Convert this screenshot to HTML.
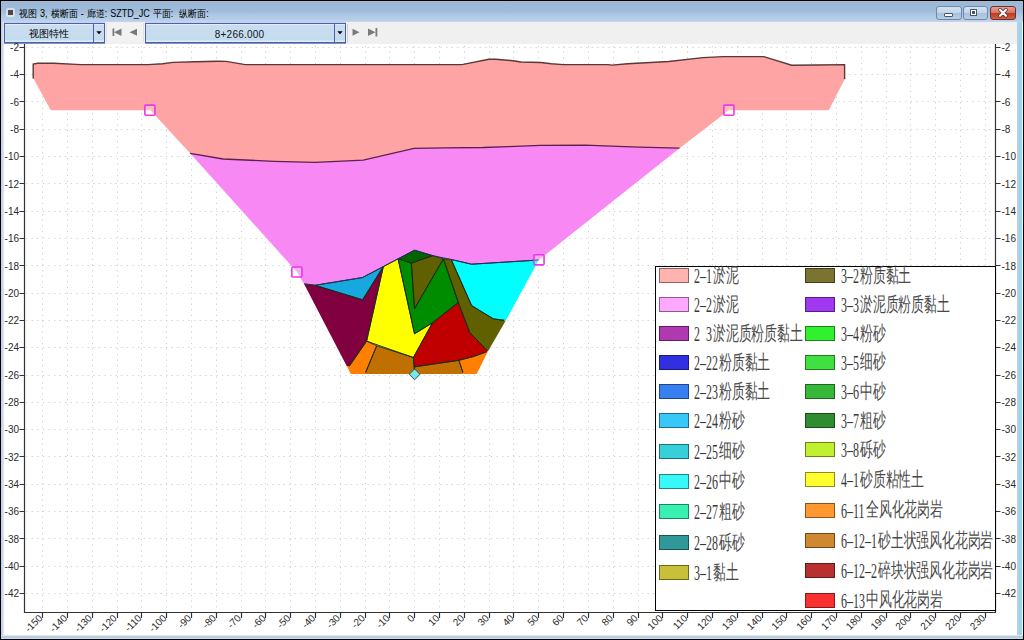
<!DOCTYPE html>
<html><head><meta charset="utf-8"><style>
html,body{margin:0;padding:0}
body{width:1024px;height:640px;overflow:hidden;position:relative;background:#000;font-family:"Liberation Sans",sans-serif}
.a{position:absolute}
.lab{position:absolute;font-size:10px;line-height:10px;color:#222;white-space:nowrap}
.lg{position:absolute;font-family:"Liberation Serif",serif;color:#111;white-space:nowrap}
</style></head><body>

<div class="a" style="left:1px;top:1px;width:1022px;height:638px;background:linear-gradient(90deg,#c8d8e8 0,#bccce4 1px,#d8e4f4 2px,#d8e4f4 1016px,#c0d0e0 1016px,#bccce8 1017px,#a0d4e8 1018px,#a0d4e8 1021px,#e0ffff 1021px)"></div>
<div class="a" style="left:1px;top:1px;width:1022px;height:21px;background:linear-gradient(180deg,#b0b8c8 0,#9cb8d8 1.5px,#a0bcda 10px,#b0cae4 15px,#b4d0e8 19px,#c4d0f0 20px,#c8d4f4 21px)"></div>
<div class="a" style="left:1px;top:635px;width:1022px;height:4px;background:linear-gradient(180deg,#dce8f4 0,#dce8f4 1px,#b8ccdc 1px,#bcd0e4 3px,#c8dcec 3px)"></div>
<div class="a" style="left:4px;top:22px;width:1013px;height:22px;background:#f0f0f0"></div>
<div class="a" style="left:4px;top:22px;width:101px;height:1px;background:#c4d0f0"></div>
<div class="a" style="left:145px;top:22px;width:201px;height:1px;background:#c4d0f0"></div>
<div class="a" style="left:4px;top:44px;width:1013px;height:591px;background:#fff"></div>
<div class="a" style="left:6px;top:8px;width:9px;height:9px;background:rgba(255,255,255,.5);border-radius:2px"></div>
<div class="a" style="left:8px;top:10px;width:5px;height:5px;background:#5a4440"></div>
<div class="a" style="left:19px;top:7.5px;font-size:10px;line-height:12px;color:#000;white-space:nowrap;font-weight:500;word-spacing:0.6px;transform:scaleX(0.9);transform-origin:0 0">视图 3, 横断面 - 廊道: SZTD_JC 平面:&nbsp; 纵断面:</div>
<div class="a" style="left:936px;top:6px;width:24px;height:12px;border:1px solid #7088a8;border-radius:3px;background:linear-gradient(180deg,#d4e2f2 0,#c0d4ea 50%,#a8c0dc 50%,#b8cce4 100%)"></div>
<div class="a" style="left:944px;top:13px;width:7px;height:2px;background:#fff;border:1px solid #48586c;border-radius:1px"></div>
<div class="a" style="left:963px;top:6px;width:23px;height:12px;border:1px solid #7088a8;border-radius:3px;background:linear-gradient(180deg,#d4e2f2 0,#c0d4ea 50%,#a8c0dc 50%,#b8cce4 100%)"></div>
<div class="a" style="left:971px;top:9.5px;width:3px;height:3px;border:1.6px solid #fff;outline:1px solid #48586c;background:#48586c"></div>
<div class="a" style="left:990px;top:6px;width:24px;height:12px;border:1px solid #6a3030;border-radius:3px;background:linear-gradient(180deg,#e8a090 0,#d87060 50%,#c03820 50%,#d06040 100%)"></div>
<svg class="a" style="left:990px;top:6px" width="26" height="14"><path d="M10 3.8 L16 9.8 M16 3.8 L10 9.8" stroke="#5a2a2a" stroke-width="3.6" stroke-linecap="round"/><path d="M10 3.8 L16 9.8 M16 3.8 L10 9.8" stroke="#fff" stroke-width="2.1" stroke-linecap="round"/></svg>
<div class="a" style="left:4px;top:23px;width:99px;height:18px;border:1px solid #5060a4;background:linear-gradient(180deg,#dceeff 0,#dceeff 1px,#cadcf0 1px,#c4dcee 16px,#d8f0f8 17px,#d8f0f8 18px);box-shadow:0 1px 0 rgba(90,100,170,.7)"></div>
<div class="a" style="left:93px;top:23px;width:1px;height:20px;background:#5060a4"></div>
<div class="a" style="left:4px;width:89px;text-align:center;line-height:12px;color:#1a2430;top:27.5px;font-size:9.6px;color:#000">视图特性</div>
<svg class="a" style="left:96.0px;top:30.5px" width="6" height="4"><path d="M0.3 0.3 L5.7 0.3 L3 3.3Z" fill="#000"/></svg>
<div class="a" style="left:145px;top:23px;width:199px;height:18px;border:1px solid #5060a4;background:linear-gradient(180deg,#dceeff 0,#dceeff 1px,#cadcf0 1px,#c4dcee 16px,#d8f0f8 17px,#d8f0f8 18px);box-shadow:0 1px 0 rgba(90,100,170,.7)"></div>
<div class="a" style="left:334px;top:23px;width:1px;height:20px;background:#5060a4"></div>
<div class="a" style="left:145px;width:189px;text-align:center;line-height:12px;color:#1a2430;top:28.8px;font-size:10px;letter-spacing:0.2px;color:#101820">8+266.000</div>
<svg class="a" style="left:337.0px;top:30.5px" width="6" height="4"><path d="M0.3 0.3 L5.7 0.3 L3 3.3Z" fill="#000"/></svg>
<div class="a" style="left:347px;top:24px;width:1px;height:19px;background:#d0d0d0"></div>
<div class="a" style="left:106px;top:23px;width:36px;height:19px;border-left:1px solid #e2e2e2;border-right:1px solid #e2e2e2;background:#f2f2f2"></div>
<svg class="a" style="left:105px;top:22px" width="290" height="22"><rect x="7.5" y="6.5" width="1.8" height="7.5" fill="#7a7a7a"/><path d="M9 10.2 L16.5 6.5 L16.5 14Z" fill="#7a7a7a"/><path d="M24.5 10.2 L32 6.8 L32 13.8Z" fill="#7a7a7a"/><path d="M254.5 10.2 L247.5 6.8 L247.5 13.8Z" fill="#7a7a7a"/><path d="M270.5 10.2 L263 6.5 L263 14Z" fill="#7a7a7a"/><rect x="270.5" y="6" width="1.8" height="8.5" fill="#7a7a7a"/></svg>
<svg class="a" style="left:0;top:0" width="1024" height="640">
<g stroke="#d2d2d2" stroke-width="1" stroke-dasharray="1.3 4.3" fill="none">
<line x1="26" y1="47.5" x2="995" y2="47.5"/>
<line x1="26" y1="74.5" x2="995" y2="74.5"/>
<line x1="26" y1="101.5" x2="995" y2="101.5"/>
<line x1="26" y1="129.5" x2="995" y2="129.5"/>
<line x1="26" y1="156.5" x2="995" y2="156.5"/>
<line x1="26" y1="183.5" x2="995" y2="183.5"/>
<line x1="26" y1="211.5" x2="995" y2="211.5"/>
<line x1="26" y1="238.5" x2="995" y2="238.5"/>
<line x1="26" y1="265.5" x2="995" y2="265.5"/>
<line x1="26" y1="293.5" x2="995" y2="293.5"/>
<line x1="26" y1="320.5" x2="995" y2="320.5"/>
<line x1="26" y1="347.5" x2="995" y2="347.5"/>
<line x1="26" y1="375.5" x2="995" y2="375.5"/>
<line x1="26" y1="402.5" x2="995" y2="402.5"/>
<line x1="26" y1="429.5" x2="995" y2="429.5"/>
<line x1="26" y1="456.5" x2="995" y2="456.5"/>
<line x1="26" y1="484.5" x2="995" y2="484.5"/>
<line x1="26" y1="511.5" x2="995" y2="511.5"/>
<line x1="26" y1="538.5" x2="995" y2="538.5"/>
<line x1="26" y1="566.5" x2="995" y2="566.5"/>
<line x1="26" y1="593.5" x2="995" y2="593.5"/>
<line x1="42.5" y1="46" x2="42.5" y2="611"/>
<line x1="67.5" y1="46" x2="67.5" y2="611"/>
<line x1="92.5" y1="46" x2="92.5" y2="611"/>
<line x1="117.5" y1="46" x2="117.5" y2="611"/>
<line x1="141.5" y1="46" x2="141.5" y2="611"/>
<line x1="166.5" y1="46" x2="166.5" y2="611"/>
<line x1="191.5" y1="46" x2="191.5" y2="611"/>
<line x1="216.5" y1="46" x2="216.5" y2="611"/>
<line x1="241.5" y1="46" x2="241.5" y2="611"/>
<line x1="265.5" y1="46" x2="265.5" y2="611"/>
<line x1="290.5" y1="46" x2="290.5" y2="611"/>
<line x1="315.5" y1="46" x2="315.5" y2="611"/>
<line x1="340.5" y1="46" x2="340.5" y2="611"/>
<line x1="365.5" y1="46" x2="365.5" y2="611"/>
<line x1="389.5" y1="46" x2="389.5" y2="611"/>
<line x1="414.5" y1="46" x2="414.5" y2="611"/>
<line x1="439.5" y1="46" x2="439.5" y2="611"/>
<line x1="464.5" y1="46" x2="464.5" y2="611"/>
<line x1="489.5" y1="46" x2="489.5" y2="611"/>
<line x1="513.5" y1="46" x2="513.5" y2="611"/>
<line x1="538.5" y1="46" x2="538.5" y2="611"/>
<line x1="563.5" y1="46" x2="563.5" y2="611"/>
<line x1="588.5" y1="46" x2="588.5" y2="611"/>
<line x1="613.5" y1="46" x2="613.5" y2="611"/>
<line x1="638.5" y1="46" x2="638.5" y2="611"/>
<line x1="662.5" y1="46" x2="662.5" y2="611"/>
<line x1="687.5" y1="46" x2="687.5" y2="611"/>
<line x1="712.5" y1="46" x2="712.5" y2="611"/>
<line x1="737.5" y1="46" x2="737.5" y2="611"/>
<line x1="762.5" y1="46" x2="762.5" y2="611"/>
<line x1="786.5" y1="46" x2="786.5" y2="611"/>
<line x1="811.5" y1="46" x2="811.5" y2="611"/>
<line x1="836.5" y1="46" x2="836.5" y2="611"/>
<line x1="861.5" y1="46" x2="861.5" y2="611"/>
<line x1="886.5" y1="46" x2="886.5" y2="611"/>
<line x1="910.5" y1="46" x2="910.5" y2="611"/>
<line x1="935.5" y1="46" x2="935.5" y2="611"/>
<line x1="960.5" y1="46" x2="960.5" y2="611"/>
<line x1="985.5" y1="46" x2="985.5" y2="611"/>
</g>
<polygon points="33.2,64.0 37.7,63.3 53.6,63.3 80.9,64.6 148.1,64.6 162.7,63.7 172.9,62.4 195.7,61.7 217.3,61.2 226.2,61.4 245.2,64.6 462.0,64.6 488.8,59.3 495.7,59.3 513.0,60.7 521.0,62.0 531.0,62.3 540.7,62.5 551.5,63.7 563.2,64.6 608.0,64.6 612.0,65.1 627.7,63.7 668.8,61.5 703.0,57.6 723.2,56.6 763.8,56.6 791.7,65.2 816.5,65.0 844.6,64.6 844.6,79.2 828.8,110.3 728.9,110.3 679.5,148.2 638.7,147.2 610.8,146.2 585.4,145.1 540.2,145.3 508.5,146.6 483.1,147.5 445.0,147.8 414.0,148.3 363.2,160.1 331.5,161.7 315.0,162.4 273.9,161.3 223.1,159.0 190.1,153.3 150.4,110.3 50.8,110.3 33.2,78.0" fill="#ffa4a4"/>
<polygon points="190.1,153.3 223.1,159.0 273.9,161.3 315.0,162.4 331.5,161.7 363.2,160.1 414.0,148.3 445.0,147.8 483.1,147.5 508.5,146.6 540.2,145.3 585.4,145.1 610.8,146.2 638.7,147.2 679.5,148.2 538.8,260.0 471.6,264.2 451.2,259.5 432.5,255.6 414.5,250.2 398.1,258.8 383.3,266.6 362.6,277.5 315.0,285.3 304.1,283.9 297.0,272.0" fill="#f888f4"/>
<polygon points="304.1,283.9 315.0,285.3 362.6,299.8 383.3,266.6 366.6,341.1 349.4,366.0 346.7,366.0" fill="#800040"/>
<polygon points="315.0,285.3 362.6,277.5 383.3,266.6 362.6,299.8" fill="#18a8e0"/>
<polygon points="383.3,266.6 398.1,258.8 414.5,333.8 432.5,322.8 413.4,357.5 366.6,341.1" fill="#ffff00"/>
<polygon points="366.6,341.1 376.7,345.8 365.0,373.9 350.9,373.9 346.7,366.0 349.4,366.0" fill="#ff8000"/>
<polygon points="376.7,345.8 413.4,357.5 414.2,366.9 414.7,373.9 365.0,373.9" fill="#c07000"/>
<polygon points="398.1,258.8 414.5,250.2 432.5,255.6 411.4,263.1" fill="#006400"/>
<polygon points="411.4,263.1 432.5,255.6 443.4,258.8 414.5,308.8" fill="#606000"/>
<polygon points="398.1,258.8 411.4,263.1 414.5,308.8 443.4,258.8 458.3,302.5 432.5,322.8 414.5,333.8" fill="#008c00"/>
<polygon points="443.4,258.8 451.2,259.5 471.6,305.6 493.4,318.9 505.8,320.5 488.0,351.3 469.7,332.5 458.3,302.5" fill="#606000"/>
<polygon points="451.2,259.5 471.6,264.2 538.8,260.0 505.8,320.5 493.4,318.9 471.6,305.6" fill="#00ffff"/>
<polygon points="432.5,322.8 458.3,302.5 469.7,332.5 488.0,351.3 472.8,356.7 458.8,360.3 414.2,366.9 413.4,357.5" fill="#c00000"/>
<polygon points="414.2,366.9 458.8,360.3 463.4,373.9 414.7,373.9" fill="#c07000"/>
<polygon points="458.8,360.3 472.8,356.7 488.0,351.3 476.7,373.9 463.4,373.9" fill="#ff8000"/>
<clipPath id="inn"><polygon points="200,230 600,230 537.3,260 475.3,372.6 352.3,372.6 298.4,272 200,250"/></clipPath>
<g clip-path="url(#inn)" fill="none" stroke="#1a2a10" stroke-width="0.9" stroke-linejoin="round">
<polygon points="304.1,283.9 315.0,285.3 362.6,299.8 383.3,266.6 366.6,341.1 349.4,366.0 346.7,366.0"/>
<polygon points="315.0,285.3 362.6,277.5 383.3,266.6 362.6,299.8"/>
<polygon points="383.3,266.6 398.1,258.8 414.5,333.8 432.5,322.8 413.4,357.5 366.6,341.1"/>
<polygon points="366.6,341.1 376.7,345.8 365.0,373.9 350.9,373.9 346.7,366.0 349.4,366.0"/>
<polygon points="376.7,345.8 413.4,357.5 414.2,366.9 414.7,373.9 365.0,373.9"/>
<polygon points="398.1,258.8 414.5,250.2 432.5,255.6 411.4,263.1"/>
<polygon points="411.4,263.1 432.5,255.6 443.4,258.8 414.5,308.8"/>
<polygon points="398.1,258.8 411.4,263.1 414.5,308.8 443.4,258.8 458.3,302.5 432.5,322.8 414.5,333.8"/>
<polygon points="443.4,258.8 451.2,259.5 471.6,305.6 493.4,318.9 505.8,320.5 488.0,351.3 469.7,332.5 458.3,302.5"/>
<polygon points="451.2,259.5 471.6,264.2 538.8,260.0 505.8,320.5 493.4,318.9 471.6,305.6"/>
<polygon points="432.5,322.8 458.3,302.5 469.7,332.5 488.0,351.3 472.8,356.7 458.8,360.3 414.2,366.9 413.4,357.5"/>
<polygon points="414.2,366.9 458.8,360.3 463.4,373.9 414.7,373.9"/>
<polygon points="458.8,360.3 472.8,356.7 488.0,351.3 476.7,373.9 463.4,373.9"/>
</g>
<polyline points="33.2,78.6 33.2,64.0 37.7,63.3 53.6,63.3 80.9,64.6 148.1,64.6 162.7,63.7 172.9,62.4 195.7,61.7 217.3,61.2 226.2,61.4 245.2,64.6 462.0,64.6 488.8,59.3 495.7,59.3 513.0,60.7 521.0,62.0 531.0,62.3 540.7,62.5 551.5,63.7 563.2,64.6 608.0,64.6 612.0,65.1 627.7,63.7 668.8,61.5 703.0,57.6 723.2,56.6 763.8,56.6 791.7,65.2 816.5,65.0 844.6,64.6 844.6,79.2" fill="none" stroke="#5a3838" stroke-width="1.4"/>
<polyline points="190.1,153.3 223.1,159.0 273.9,161.3 315.0,162.4 331.5,161.7 363.2,160.1 414.0,148.3 445.0,147.8 483.1,147.5 508.5,146.6 540.2,145.3 585.4,145.1 610.8,146.2 638.7,147.2 679.5,148.2" fill="none" stroke="#5a2050" stroke-width="1.3"/>
<polyline points="538.8,260.0 471.6,264.2 451.2,259.5 432.5,255.6 414.5,250.2 398.1,258.8 383.3,266.6 362.6,277.5 315.0,285.3 304.1,283.9" fill="none" stroke="#203060" stroke-width="1"/>
<rect x="144.85" y="105.10" width="10.1" height="10.1" rx="1" fill="rgba(255,255,255,.3)" stroke="#e838e8" stroke-width="1.6"/>
<rect x="291.85" y="266.95" width="10.1" height="10.1" rx="1" fill="rgba(255,255,255,.3)" stroke="#e838e8" stroke-width="1.6"/>
<rect x="533.95" y="254.75" width="10.1" height="10.1" rx="1" fill="rgba(255,255,255,.3)" stroke="#e838e8" stroke-width="1.6"/>
<rect x="723.85" y="105.10" width="10.1" height="10.1" rx="1" fill="rgba(255,255,255,.3)" stroke="#e838e8" stroke-width="1.6"/>
<path d="M414.6 368.9 L420 374.3 L414.6 379.7 L409.2 374.3Z" fill="#78e6e6" stroke="#285050" stroke-width="1"/>
<g stroke="#333" stroke-width="1.2" fill="none">
<path d="M24.5 44 V612.5 H996 M995.5 44 V612"/>
<path d="M19.5 47.5 H24 M995 47.5 H1000.5"/>
<path d="M19.5 74.5 H24 M995 74.5 H1000.5"/>
<path d="M19.5 101.5 H24 M995 101.5 H1000.5"/>
<path d="M19.5 129.5 H24 M995 129.5 H1000.5"/>
<path d="M19.5 156.5 H24 M995 156.5 H1000.5"/>
<path d="M19.5 183.5 H24 M995 183.5 H1000.5"/>
<path d="M19.5 211.5 H24 M995 211.5 H1000.5"/>
<path d="M19.5 238.5 H24 M995 238.5 H1000.5"/>
<path d="M19.5 265.5 H24 M995 265.5 H1000.5"/>
<path d="M19.5 293.5 H24 M995 293.5 H1000.5"/>
<path d="M19.5 320.5 H24 M995 320.5 H1000.5"/>
<path d="M19.5 347.5 H24 M995 347.5 H1000.5"/>
<path d="M19.5 375.5 H24 M995 375.5 H1000.5"/>
<path d="M19.5 402.5 H24 M995 402.5 H1000.5"/>
<path d="M19.5 429.5 H24 M995 429.5 H1000.5"/>
<path d="M19.5 456.5 H24 M995 456.5 H1000.5"/>
<path d="M19.5 484.5 H24 M995 484.5 H1000.5"/>
<path d="M19.5 511.5 H24 M995 511.5 H1000.5"/>
<path d="M19.5 538.5 H24 M995 538.5 H1000.5"/>
<path d="M19.5 566.5 H24 M995 566.5 H1000.5"/>
<path d="M19.5 593.5 H24 M995 593.5 H1000.5"/>
<path d="M42.5 612 V618"/>
<path d="M67.5 612 V618"/>
<path d="M92.5 612 V618"/>
<path d="M117.5 612 V618"/>
<path d="M141.5 612 V618"/>
<path d="M166.5 612 V618"/>
<path d="M191.5 612 V618"/>
<path d="M216.5 612 V618"/>
<path d="M241.5 612 V618"/>
<path d="M265.5 612 V618"/>
<path d="M290.5 612 V618"/>
<path d="M315.5 612 V618"/>
<path d="M340.5 612 V618"/>
<path d="M365.5 612 V618"/>
<path d="M389.5 612 V618"/>
<path d="M414.5 612 V618"/>
<path d="M439.5 612 V618"/>
<path d="M464.5 612 V618"/>
<path d="M489.5 612 V618"/>
<path d="M513.5 612 V618"/>
<path d="M538.5 612 V618"/>
<path d="M563.5 612 V618"/>
<path d="M588.5 612 V618"/>
<path d="M613.5 612 V618"/>
<path d="M638.5 612 V618"/>
<path d="M662.5 612 V618"/>
<path d="M687.5 612 V618"/>
<path d="M712.5 612 V618"/>
<path d="M737.5 612 V618"/>
<path d="M762.5 612 V618"/>
<path d="M786.5 612 V618"/>
<path d="M811.5 612 V618"/>
<path d="M836.5 612 V618"/>
<path d="M861.5 612 V618"/>
<path d="M886.5 612 V618"/>
<path d="M910.5 612 V618"/>
<path d="M935.5 612 V618"/>
<path d="M960.5 612 V618"/>
<path d="M985.5 612 V618"/>
</g>
<g font-family="Liberation Sans, sans-serif" font-size="10" fill="#2a2a2a">
<text x="19" y="51.0" text-anchor="end">-2</text>
<text x="1001.5" y="51.0">-2</text>
<text x="19" y="78.3" text-anchor="end">-4</text>
<text x="1001.5" y="78.3">-4</text>
<text x="19" y="105.6" text-anchor="end">-6</text>
<text x="1001.5" y="105.6">-6</text>
<text x="19" y="132.9" text-anchor="end">-8</text>
<text x="1001.5" y="132.9">-8</text>
<text x="19" y="160.2" text-anchor="end">-10</text>
<text x="1001.5" y="160.2">-10</text>
<text x="19" y="187.5" text-anchor="end">-12</text>
<text x="1001.5" y="187.5">-12</text>
<text x="19" y="214.9" text-anchor="end">-14</text>
<text x="1001.5" y="214.9">-14</text>
<text x="19" y="242.2" text-anchor="end">-16</text>
<text x="1001.5" y="242.2">-16</text>
<text x="19" y="269.5" text-anchor="end">-18</text>
<text x="1001.5" y="269.5">-18</text>
<text x="19" y="296.8" text-anchor="end">-20</text>
<text x="1001.5" y="296.8">-20</text>
<text x="19" y="324.1" text-anchor="end">-22</text>
<text x="1001.5" y="324.1">-22</text>
<text x="19" y="351.4" text-anchor="end">-24</text>
<text x="1001.5" y="351.4">-24</text>
<text x="19" y="378.7" text-anchor="end">-26</text>
<text x="1001.5" y="378.7">-26</text>
<text x="19" y="406.0" text-anchor="end">-28</text>
<text x="1001.5" y="406.0">-28</text>
<text x="19" y="433.3" text-anchor="end">-30</text>
<text x="1001.5" y="433.3">-30</text>
<text x="19" y="460.6" text-anchor="end">-32</text>
<text x="1001.5" y="460.6">-32</text>
<text x="19" y="488.0" text-anchor="end">-34</text>
<text x="1001.5" y="488.0">-34</text>
<text x="19" y="515.3" text-anchor="end">-36</text>
<text x="1001.5" y="515.3">-36</text>
<text x="19" y="542.6" text-anchor="end">-38</text>
<text x="1001.5" y="542.6">-38</text>
<text x="19" y="569.9" text-anchor="end">-40</text>
<text x="1001.5" y="569.9">-40</text>
<text x="19" y="597.2" text-anchor="end">-42</text>
<text x="1001.5" y="597.2">-42</text>
<text transform="translate(43.1,618.7) rotate(-45)" text-anchor="end">-150</text>
<text transform="translate(67.9,618.7) rotate(-45)" text-anchor="end">-140</text>
<text transform="translate(92.7,618.7) rotate(-45)" text-anchor="end">-130</text>
<text transform="translate(117.5,618.7) rotate(-45)" text-anchor="end">-120</text>
<text transform="translate(142.3,618.7) rotate(-45)" text-anchor="end">-110</text>
<text transform="translate(167.2,618.7) rotate(-45)" text-anchor="end">-100</text>
<text transform="translate(192.0,618.7) rotate(-45)" text-anchor="end">-90</text>
<text transform="translate(216.8,618.7) rotate(-45)" text-anchor="end">-80</text>
<text transform="translate(241.6,618.7) rotate(-45)" text-anchor="end">-70</text>
<text transform="translate(266.4,618.7) rotate(-45)" text-anchor="end">-60</text>
<text transform="translate(291.2,618.7) rotate(-45)" text-anchor="end">-50</text>
<text transform="translate(316.0,618.7) rotate(-45)" text-anchor="end">-40</text>
<text transform="translate(340.8,618.7) rotate(-45)" text-anchor="end">-30</text>
<text transform="translate(365.6,618.7) rotate(-45)" text-anchor="end">-20</text>
<text transform="translate(390.4,618.7) rotate(-45)" text-anchor="end">-10</text>
<text transform="translate(415.2,618.7) rotate(-45)" text-anchor="end">0</text>
<text transform="translate(440.1,618.7) rotate(-45)" text-anchor="end">10</text>
<text transform="translate(464.9,618.7) rotate(-45)" text-anchor="end">20</text>
<text transform="translate(489.7,618.7) rotate(-45)" text-anchor="end">30</text>
<text transform="translate(514.5,618.7) rotate(-45)" text-anchor="end">40</text>
<text transform="translate(539.3,618.7) rotate(-45)" text-anchor="end">50</text>
<text transform="translate(564.1,618.7) rotate(-45)" text-anchor="end">60</text>
<text transform="translate(588.9,618.7) rotate(-45)" text-anchor="end">70</text>
<text transform="translate(613.7,618.7) rotate(-45)" text-anchor="end">80</text>
<text transform="translate(638.5,618.7) rotate(-45)" text-anchor="end">90</text>
<text transform="translate(663.4,618.7) rotate(-45)" text-anchor="end">100</text>
<text transform="translate(688.2,618.7) rotate(-45)" text-anchor="end">110</text>
<text transform="translate(713.0,618.7) rotate(-45)" text-anchor="end">120</text>
<text transform="translate(737.8,618.7) rotate(-45)" text-anchor="end">130</text>
<text transform="translate(762.6,618.7) rotate(-45)" text-anchor="end">140</text>
<text transform="translate(787.4,618.7) rotate(-45)" text-anchor="end">150</text>
<text transform="translate(812.2,618.7) rotate(-45)" text-anchor="end">160</text>
<text transform="translate(837.0,618.7) rotate(-45)" text-anchor="end">170</text>
<text transform="translate(861.8,618.7) rotate(-45)" text-anchor="end">180</text>
<text transform="translate(886.6,618.7) rotate(-45)" text-anchor="end">190</text>
<text transform="translate(911.4,618.7) rotate(-45)" text-anchor="end">200</text>
<text transform="translate(936.3,618.7) rotate(-45)" text-anchor="end">210</text>
<text transform="translate(961.1,618.7) rotate(-45)" text-anchor="end">220</text>
<text transform="translate(985.9,618.7) rotate(-45)" text-anchor="end">230</text>
</g>
</svg>
<div class="a" style="left:655px;top:266px;width:339px;height:343px;border:1px solid #000;background:#fff"></div>
<div class="a" style="left:659px;top:268.0px;width:28px;height:13px;background:#ffb4b0;border:1px solid rgba(0,0,0,.45)"></div>
<div class="lg" style="left:694px;top:265.1px;font-size:20px;line-height:20px;color:#383838;transform:scale(0.6,1.03);transform-origin:0 0">2&#8211;1</div>
<div class="lg" style="left:712.5px;top:264.8px;font-size:16px;line-height:18px;font-weight:300;color:#4a4a4a;transform:scale(0.8,1.24);transform-origin:0 0">淤泥</div>
<div class="a" style="left:659px;top:297.0px;width:28px;height:13px;background:#ffa8ff;border:1px solid rgba(0,0,0,.45)"></div>
<div class="lg" style="left:694px;top:294.1px;font-size:20px;line-height:20px;color:#383838;transform:scale(0.6,1.03);transform-origin:0 0">2&#8211;2</div>
<div class="lg" style="left:712.5px;top:293.8px;font-size:16px;line-height:18px;font-weight:300;color:#4a4a4a;transform:scale(0.8,1.24);transform-origin:0 0">淤泥</div>
<div class="a" style="left:659px;top:326.2px;width:28px;height:13px;background:#b038b0;border:1px solid rgba(0,0,0,.45)"></div>
<div class="lg" style="left:694px;top:323.3px;font-size:20px;line-height:20px;color:#383838;transform:scale(0.6,1.03);transform-origin:0 0">2&#8194;3</div>
<div class="lg" style="left:712.5px;top:323.0px;font-size:16px;line-height:18px;font-weight:300;color:#4a4a4a;transform:scale(0.8,1.24);transform-origin:0 0">淤泥质粉质黏土</div>
<div class="a" style="left:659px;top:355.0px;width:28px;height:13px;background:#3030e0;border:1px solid rgba(0,0,0,.45)"></div>
<div class="lg" style="left:694px;top:352.1px;font-size:20px;line-height:20px;color:#383838;transform:scale(0.6,1.03);transform-origin:0 0">2&#8211;22</div>
<div class="lg" style="left:718.5px;top:351.8px;font-size:16px;line-height:18px;font-weight:300;color:#4a4a4a;transform:scale(0.8,1.24);transform-origin:0 0">粉质黏土</div>
<div class="a" style="left:659px;top:384.0px;width:28px;height:13px;background:#3880f0;border:1px solid rgba(0,0,0,.45)"></div>
<div class="lg" style="left:694px;top:381.1px;font-size:20px;line-height:20px;color:#383838;transform:scale(0.6,1.03);transform-origin:0 0">2&#8211;23</div>
<div class="lg" style="left:718.5px;top:380.8px;font-size:16px;line-height:18px;font-weight:300;color:#4a4a4a;transform:scale(0.8,1.24);transform-origin:0 0">粉质黏土</div>
<div class="a" style="left:659px;top:413.0px;width:28px;height:13px;background:#38c8f8;border:1px solid rgba(0,0,0,.45)"></div>
<div class="lg" style="left:694px;top:410.1px;font-size:20px;line-height:20px;color:#383838;transform:scale(0.6,1.03);transform-origin:0 0">2&#8211;24</div>
<div class="lg" style="left:718.5px;top:409.8px;font-size:16px;line-height:18px;font-weight:300;color:#4a4a4a;transform:scale(0.8,1.24);transform-origin:0 0">粉砂</div>
<div class="a" style="left:659px;top:443.5px;width:28px;height:13px;background:#38d0d8;border:1px solid rgba(0,0,0,.45)"></div>
<div class="lg" style="left:694px;top:440.6px;font-size:20px;line-height:20px;color:#383838;transform:scale(0.6,1.03);transform-origin:0 0">2&#8211;25</div>
<div class="lg" style="left:718.5px;top:440.3px;font-size:16px;line-height:18px;font-weight:300;color:#4a4a4a;transform:scale(0.8,1.24);transform-origin:0 0">细砂</div>
<div class="a" style="left:659px;top:473.6px;width:28px;height:13px;background:#38f8f8;border:1px solid rgba(0,0,0,.45)"></div>
<div class="lg" style="left:694px;top:470.7px;font-size:20px;line-height:20px;color:#383838;transform:scale(0.6,1.03);transform-origin:0 0">2&#8211;26</div>
<div class="lg" style="left:718.5px;top:470.4px;font-size:16px;line-height:18px;font-weight:300;color:#4a4a4a;transform:scale(0.8,1.24);transform-origin:0 0">中砂</div>
<div class="a" style="left:659px;top:504.0px;width:28px;height:13px;background:#38f0b0;border:1px solid rgba(0,0,0,.45)"></div>
<div class="lg" style="left:694px;top:501.1px;font-size:20px;line-height:20px;color:#383838;transform:scale(0.6,1.03);transform-origin:0 0">2&#8211;27</div>
<div class="lg" style="left:718.5px;top:500.8px;font-size:16px;line-height:18px;font-weight:300;color:#4a4a4a;transform:scale(0.8,1.24);transform-origin:0 0">粗砂</div>
<div class="a" style="left:659px;top:535.0px;width:28px;height:13px;background:#309898;border:1px solid rgba(0,0,0,.45)"></div>
<div class="lg" style="left:694px;top:532.1px;font-size:20px;line-height:20px;color:#383838;transform:scale(0.6,1.03);transform-origin:0 0">2&#8211;28</div>
<div class="lg" style="left:718.5px;top:531.8px;font-size:16px;line-height:18px;font-weight:300;color:#4a4a4a;transform:scale(0.8,1.24);transform-origin:0 0">砾砂</div>
<div class="a" style="left:659px;top:565.2px;width:28px;height:13px;background:#c8c038;border:1px solid rgba(0,0,0,.45)"></div>
<div class="lg" style="left:694px;top:562.3px;font-size:20px;line-height:20px;color:#383838;transform:scale(0.6,1.03);transform-origin:0 0">3&#8211;1</div>
<div class="lg" style="left:712.5px;top:562.0px;font-size:16px;line-height:18px;font-weight:300;color:#4a4a4a;transform:scale(0.8,1.24);transform-origin:0 0">黏土</div>
<div class="a" style="left:805px;top:268.3px;width:28px;height:13px;background:#7a7430;border:1px solid rgba(0,0,0,.45)"></div>
<div class="lg" style="left:841px;top:265.4px;font-size:20px;line-height:20px;color:#383838;transform:scale(0.6,1.03);transform-origin:0 0">3&#8211;2</div>
<div class="lg" style="left:859.5px;top:265.1px;font-size:16px;line-height:18px;font-weight:300;color:#4a4a4a;transform:scale(0.8,1.24);transform-origin:0 0">粉质黏土</div>
<div class="a" style="left:805px;top:297.0px;width:28px;height:13px;background:#a038f0;border:1px solid rgba(0,0,0,.45)"></div>
<div class="lg" style="left:841px;top:294.1px;font-size:20px;line-height:20px;color:#383838;transform:scale(0.6,1.03);transform-origin:0 0">3&#8211;3</div>
<div class="lg" style="left:859.5px;top:293.8px;font-size:16px;line-height:18px;font-weight:300;color:#4a4a4a;transform:scale(0.8,1.24);transform-origin:0 0">淤泥质粉质黏土</div>
<div class="a" style="left:805px;top:326.0px;width:28px;height:13px;background:#30f030;border:1px solid rgba(0,0,0,.45)"></div>
<div class="lg" style="left:841px;top:323.1px;font-size:20px;line-height:20px;color:#383838;transform:scale(0.6,1.03);transform-origin:0 0">3&#8211;4</div>
<div class="lg" style="left:859.5px;top:322.8px;font-size:16px;line-height:18px;font-weight:300;color:#4a4a4a;transform:scale(0.8,1.24);transform-origin:0 0">粉砂</div>
<div class="a" style="left:805px;top:354.5px;width:28px;height:13px;background:#40e040;border:1px solid rgba(0,0,0,.45)"></div>
<div class="lg" style="left:841px;top:351.6px;font-size:20px;line-height:20px;color:#383838;transform:scale(0.6,1.03);transform-origin:0 0">3&#8211;5</div>
<div class="lg" style="left:859.5px;top:351.3px;font-size:16px;line-height:18px;font-weight:300;color:#4a4a4a;transform:scale(0.8,1.24);transform-origin:0 0">细砂</div>
<div class="a" style="left:805px;top:383.7px;width:28px;height:13px;background:#38b838;border:1px solid rgba(0,0,0,.45)"></div>
<div class="lg" style="left:841px;top:380.8px;font-size:20px;line-height:20px;color:#383838;transform:scale(0.6,1.03);transform-origin:0 0">3&#8211;6</div>
<div class="lg" style="left:859.5px;top:380.5px;font-size:16px;line-height:18px;font-weight:300;color:#4a4a4a;transform:scale(0.8,1.24);transform-origin:0 0">中砂</div>
<div class="a" style="left:805px;top:413.2px;width:28px;height:13px;background:#308c30;border:1px solid rgba(0,0,0,.45)"></div>
<div class="lg" style="left:841px;top:410.3px;font-size:20px;line-height:20px;color:#383838;transform:scale(0.6,1.03);transform-origin:0 0">3&#8211;7</div>
<div class="lg" style="left:859.5px;top:410.0px;font-size:16px;line-height:18px;font-weight:300;color:#4a4a4a;transform:scale(0.8,1.24);transform-origin:0 0">粗砂</div>
<div class="a" style="left:805px;top:442.0px;width:28px;height:13px;background:#c0f030;border:1px solid rgba(0,0,0,.45)"></div>
<div class="lg" style="left:841px;top:439.1px;font-size:20px;line-height:20px;color:#383838;transform:scale(0.6,1.03);transform-origin:0 0">3&#8211;8</div>
<div class="lg" style="left:859.5px;top:438.8px;font-size:16px;line-height:18px;font-weight:300;color:#4a4a4a;transform:scale(0.8,1.24);transform-origin:0 0">砾砂</div>
<div class="a" style="left:805px;top:471.8px;width:28px;height:13px;background:#ffff30;border:1px solid rgba(0,0,0,.45)"></div>
<div class="lg" style="left:841px;top:468.9px;font-size:20px;line-height:20px;color:#383838;transform:scale(0.6,1.03);transform-origin:0 0">4&#8211;1</div>
<div class="lg" style="left:859.5px;top:468.6px;font-size:16px;line-height:18px;font-weight:300;color:#4a4a4a;transform:scale(0.8,1.24);transform-origin:0 0">砂质粘性土</div>
<div class="a" style="left:805px;top:502.5px;width:28px;height:13px;background:#ff9830;border:1px solid rgba(0,0,0,.45)"></div>
<div class="lg" style="left:841px;top:499.6px;font-size:20px;line-height:20px;color:#383838;transform:scale(0.6,1.03);transform-origin:0 0">6&#8211;11</div>
<div class="lg" style="left:865.5px;top:499.3px;font-size:16px;line-height:18px;font-weight:300;color:#4a4a4a;transform:scale(0.8,1.24);transform-origin:0 0">全风化花岗岩</div>
<div class="a" style="left:805px;top:533.0px;width:28px;height:13px;background:#d08830;border:1px solid rgba(0,0,0,.45)"></div>
<div class="lg" style="left:841px;top:530.1px;font-size:20px;line-height:20px;color:#383838;transform:scale(0.6,1.03);transform-origin:0 0">6&#8211;12&#8211;1</div>
<div class="lg" style="left:877.5px;top:529.8px;font-size:16px;line-height:18px;font-weight:300;color:#4a4a4a;transform:scale(0.8,1.24);transform-origin:0 0">砂土状强风化花岗岩</div>
<div class="a" style="left:805px;top:563.3px;width:28px;height:13px;background:#b83030;border:1px solid rgba(0,0,0,.45)"></div>
<div class="lg" style="left:841px;top:560.4px;font-size:20px;line-height:20px;color:#383838;transform:scale(0.6,1.03);transform-origin:0 0">6&#8211;12&#8211;2</div>
<div class="lg" style="left:877.5px;top:560.1px;font-size:16px;line-height:18px;font-weight:300;color:#4a4a4a;transform:scale(0.8,1.24);transform-origin:0 0">碎块状强风化花岗岩</div>
<div class="a" style="left:805px;top:592.5px;width:28px;height:13px;background:#f83030;border:1px solid rgba(0,0,0,.45)"></div>
<div class="lg" style="left:841px;top:589.6px;font-size:20px;line-height:20px;color:#383838;transform:scale(0.6,1.03);transform-origin:0 0">6&#8211;13</div>
<div class="lg" style="left:865.5px;top:589.3px;font-size:16px;line-height:18px;font-weight:300;color:#4a4a4a;transform:scale(0.8,1.24);transform-origin:0 0">中风化花岗岩</div>
</body></html>
